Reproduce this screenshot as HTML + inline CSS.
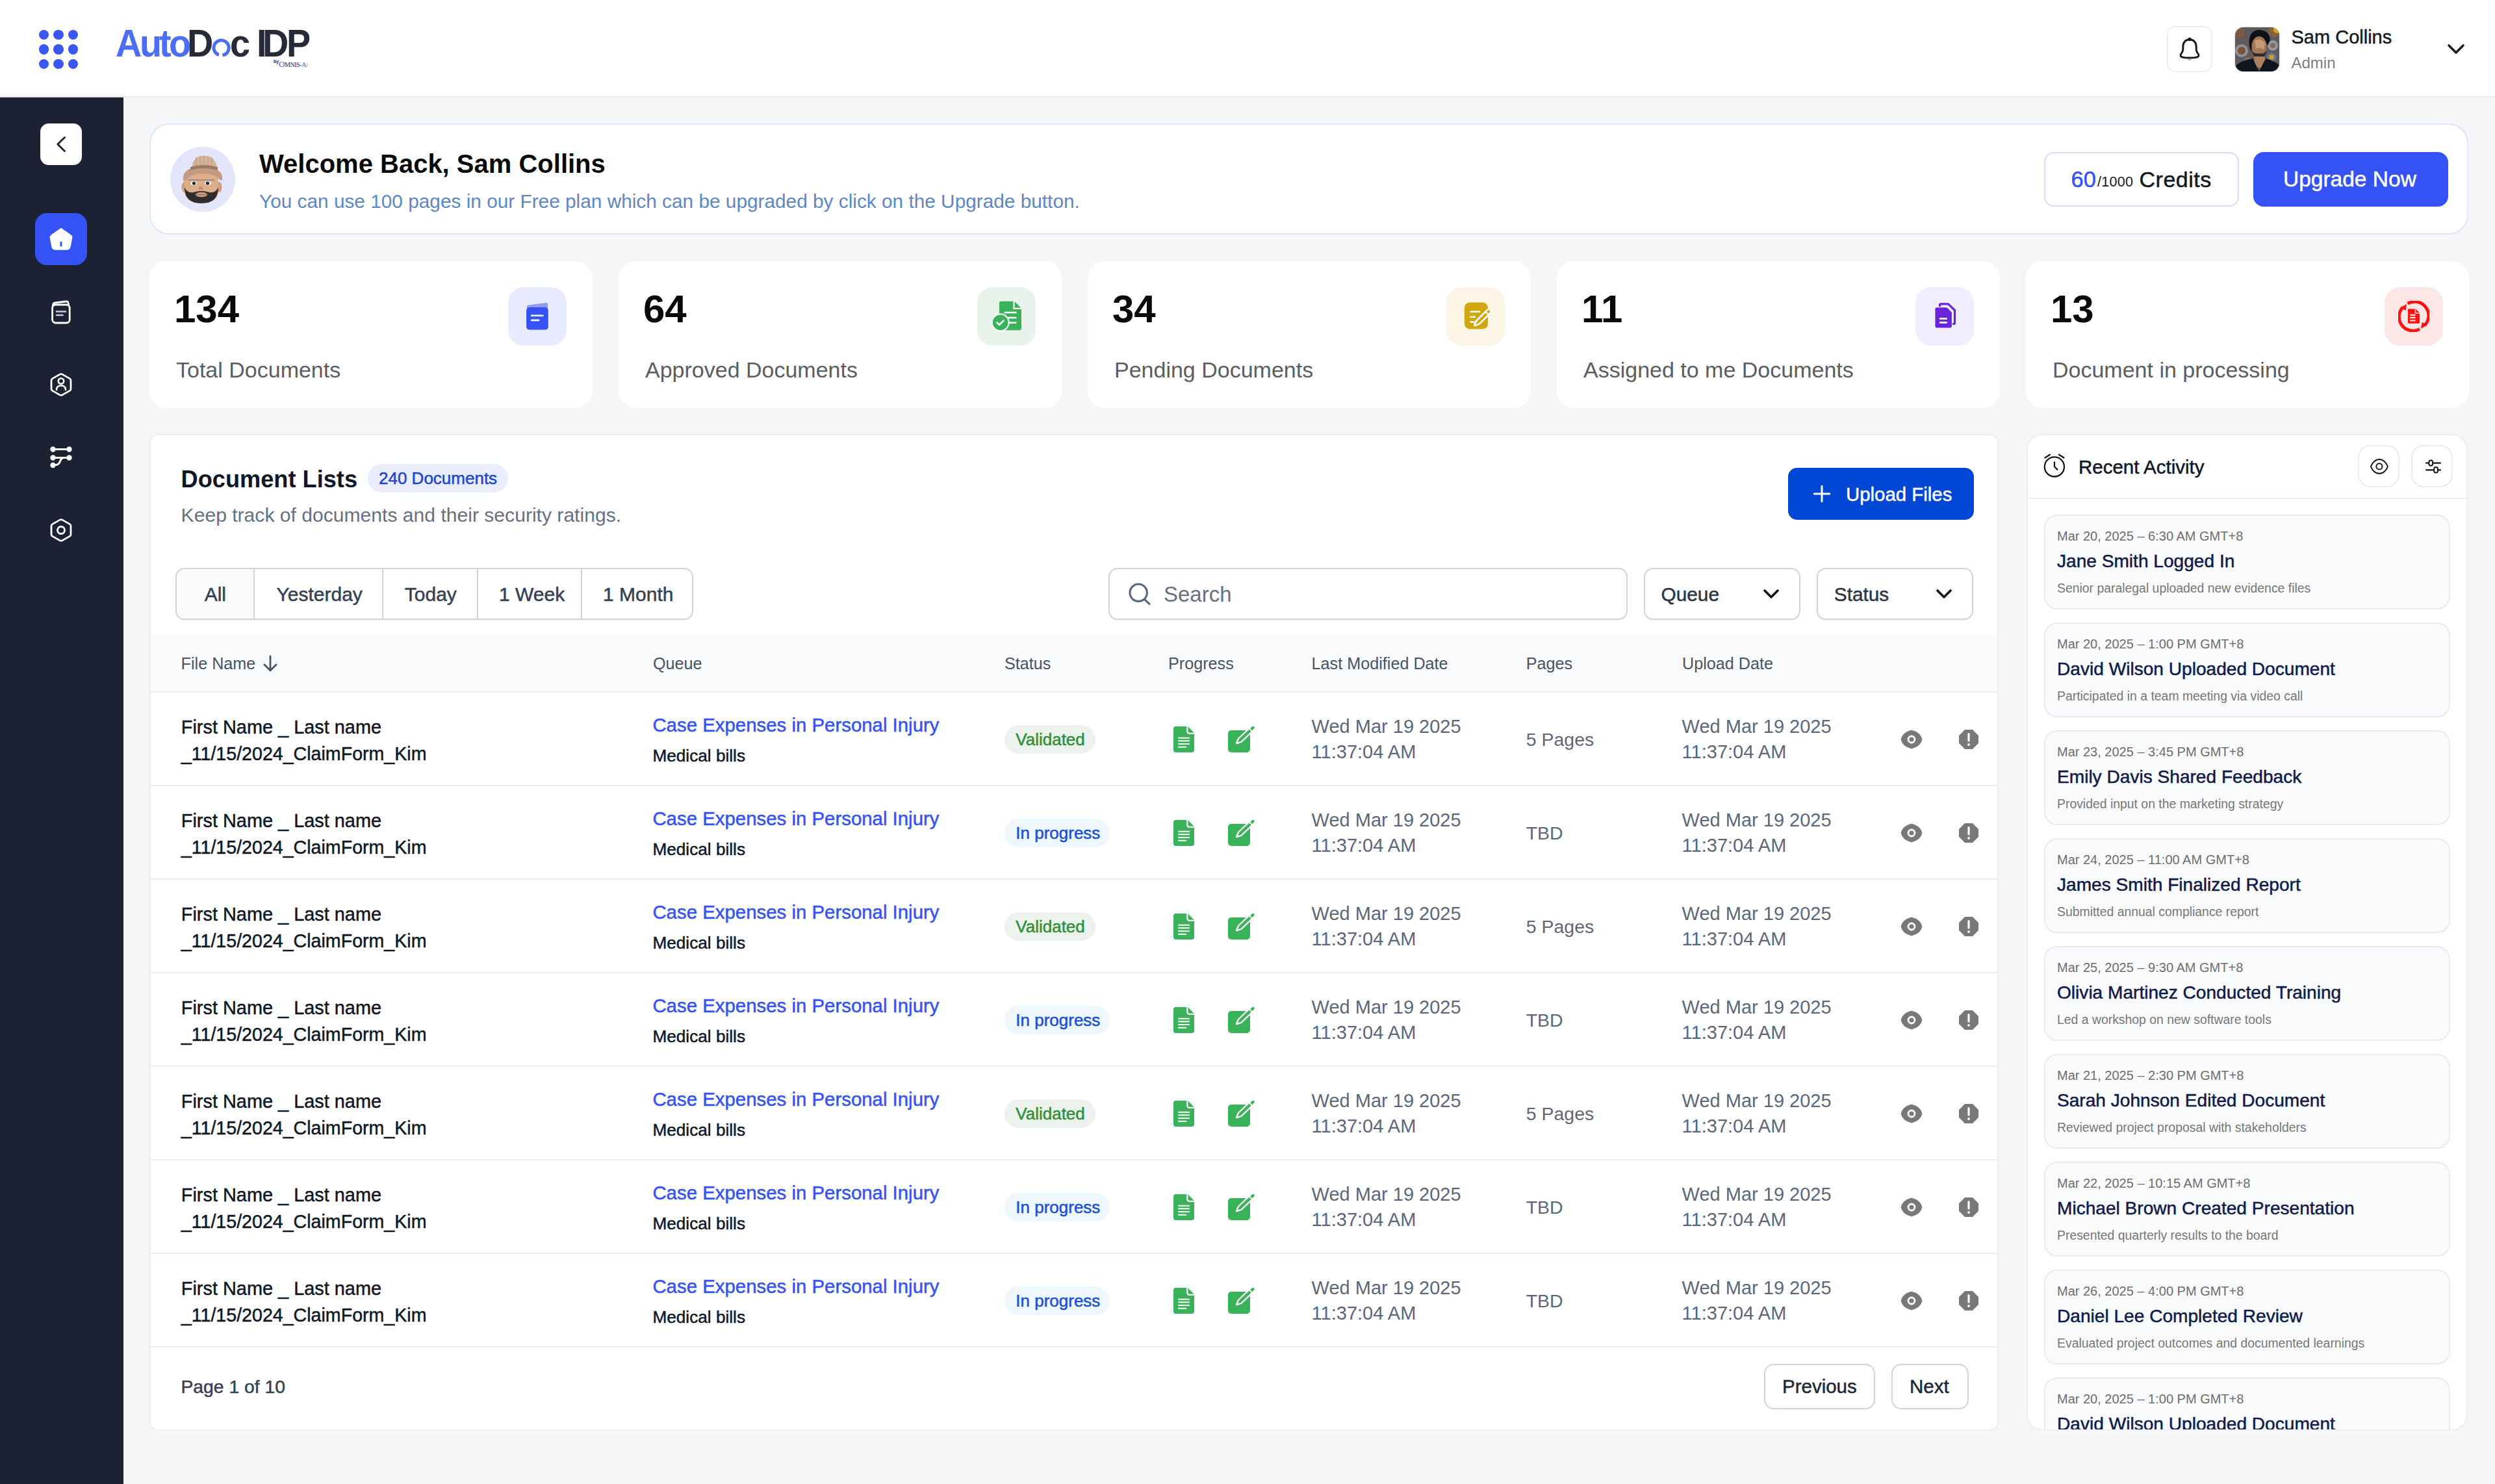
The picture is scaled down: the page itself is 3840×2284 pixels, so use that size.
<!DOCTYPE html>
<html><head><meta charset="utf-8"><title>AutoDoc IDP</title>
<style>
html,body{margin:0;padding:0;}
body{width:3840px;height:2284px;overflow:hidden;background:#f5f6f8;font-family:"Liberation Sans",sans-serif;position:relative;}
.t{position:absolute;line-height:1;white-space:nowrap;}
.b{position:absolute;box-sizing:border-box;}
.m{-webkit-text-stroke:0.5px currentColor;}
</style></head><body>

<div class="b" style="left:0.0px;top:0.0px;width:3840.0px;height:148.0px;background:#ffffff;"></div>
<div class="b" style="left:0.0px;top:148.0px;width:3840.0px;height:2.0px;background:#e7e9ee;"></div>
<div class="b" style="left:59.9px;top:45.7px;width:15.6px;height:15.6px;background:#3b57f3;border-radius:50%;"></div>
<div class="b" style="left:82.2px;top:45.7px;width:15.6px;height:15.6px;background:#3b57f3;border-radius:50%;"></div>
<div class="b" style="left:104.5px;top:45.7px;width:15.6px;height:15.6px;background:#3b57f3;border-radius:50%;"></div>
<div class="b" style="left:59.9px;top:68.2px;width:15.6px;height:15.6px;background:#3b57f3;border-radius:50%;"></div>
<div class="b" style="left:82.2px;top:68.2px;width:15.6px;height:15.6px;background:#3b57f3;border-radius:50%;"></div>
<div class="b" style="left:104.5px;top:68.2px;width:15.6px;height:15.6px;background:#3b57f3;border-radius:50%;"></div>
<div class="b" style="left:59.9px;top:90.7px;width:15.6px;height:15.6px;background:#3b57f3;border-radius:50%;"></div>
<div class="b" style="left:82.2px;top:90.7px;width:15.6px;height:15.6px;background:#3b57f3;border-radius:50%;"></div>
<div class="b" style="left:104.5px;top:90.7px;width:15.6px;height:15.6px;background:#3b57f3;border-radius:50%;"></div>
<div class="t" style="left:178.4px;top:36.8px;font-size:60px;font-weight:700;color:#4b6ef5;transform:scaleX(0.93);transform-origin:0 0;">A</div>
<div class="t" style="left:215.0px;top:36.8px;font-size:60px;font-weight:700;color:#4b6ef5;transform:scaleX(0.93);transform-origin:0 0;">u</div>
<div class="t" style="left:244.8px;top:36.8px;font-size:60px;font-weight:700;color:#4b6ef5;transform:scaleX(0.93);transform-origin:0 0;">t</div>
<div class="t" style="left:259.8px;top:36.8px;font-size:60px;font-weight:700;color:#4b6ef5;transform:scaleX(0.93);transform-origin:0 0;">o</div>
<div class="t" style="left:287.5px;top:36.8px;font-size:60px;font-weight:700;color:#262b37;transform:scaleX(0.93);transform-origin:0 0;">D</div>
<div class="t" style="left:354.1px;top:36.8px;font-size:60px;font-weight:700;color:#262b37;transform:scaleX(0.93);transform-origin:0 0;">c</div>
<div class="t" style="left:395.3px;top:36.8px;font-size:60px;font-weight:700;color:#262b37;transform:scaleX(0.93);transform-origin:0 0;">I</div>
<div class="t" style="left:403.6px;top:36.8px;font-size:60px;font-weight:700;color:#262b37;transform:scaleX(0.93);transform-origin:0 0;">D</div>
<div class="t" style="left:440.8px;top:36.8px;font-size:60px;font-weight:700;color:#262b37;transform:scaleX(0.93);transform-origin:0 0;">P</div>
<svg class="b" style="left:326.0px;top:59.0px;" width="30" height="30" viewBox="0 0 30 30"><circle cx="14.6" cy="14.6" r="11.6" fill="none" stroke="#4b6ef5" stroke-width="5" stroke-dasharray="66.8 6.1" transform="rotate(109 14.6 14.6)"/></svg>
<div class="t" style="left:421px;top:91px;font-size:7px;font-weight:700;color:#262b37;">by</div>
<div class="t" style="left:429px;top:92px;font-size:10px;color:#1c2a6b;font-family:'Liberation Serif',serif;letter-spacing:-0.4px;"><span style="color:#3e5ef0;font-size:13px">O</span>MNIS<span style="color:#3e5ef0">-A</span><span style="color:#e8a23c">i</span></div>
<div class="b" style="left:3335.0px;top:40.0px;width:70.0px;height:71.0px;border:2px solid #eceef2;border-radius:13px;background:#fff;"></div>
<svg class="b" style="left:3352.0px;top:55.0px;" width="36" height="42" viewBox="0 0 36 42"><path d="M18 5.8 C11.5 5.8 7.8 10.8 7.8 16.8 L7.8 21 C7.8 24 6.6 25.6 5 27.6 C2.8 30.4 4 32.6 8 33.4 C12 34.2 24 34.2 28 33.4 C32 32.6 33.2 30.4 31 27.6 C29.4 25.6 28.2 24 28.2 21 L28.2 16.8 C28.2 10.8 24.5 5.8 18 5.8 Z" fill="none" stroke="#14171f" stroke-width="2.9" stroke-linejoin="round"/><circle cx="18" cy="5.4" r="2.6" fill="#14171f"/><path d="M13.8 35.6 Q18 40.5 22.2 35.6 Z" fill="#a9abb0"/></svg>
<div class="b" style="left:3438px;top:40px;width:72px;height:72px;border-radius:15px;background:#eef0f4;"></div>
<svg class="b" style="left:3440.0px;top:42.0px;" width="68" height="68" viewBox="0 0 68 68"><defs><clipPath id="avc"><rect x="0" y="0" width="68" height="68" rx="13"/></clipPath></defs><g clip-path="url(#avc)"><rect width="68" height="68" fill="#5f5a5c"/><circle cx="6" cy="8" r="9" fill="#7b5a45"/><circle cx="10" cy="36" r="10" fill="#8e9099"/><circle cx="10" cy="36" r="6" fill="#7a5138"/><circle cx="60" cy="6" r="9" fill="#8a6040"/><circle cx="64" cy="4" r="5" fill="#d4a21c"/><circle cx="58" cy="28" r="8" fill="#8f97a8"/><circle cx="58" cy="28" r="4" fill="#866a5a"/><circle cx="56" cy="46" r="7" fill="#6f7a90"/><circle cx="56" cy="46" r="3.5" fill="#d3a01d"/><circle cx="44" cy="54" r="6" fill="#9aa0ae"/><circle cx="20" cy="52" r="6" fill="#8a6a58"/><path d="M22 30 Q19 6 36 4 Q53 4 54 20 L50 28 Q45 16 33 20 Q26 24 25 38 Z" fill="#0e1116"/><ellipse cx="37" cy="29" rx="11.5" ry="15" fill="#a57656"/><path d="M30 20 Q40 17 46 24 L44 34 Q38 30 32 33 Z" fill="#c59a7a"/><path d="M26 36 Q28 48 37 48 Q47 48 48 36 Q44 42 37 40 Q30 42 26 36 Z" fill="#2b2c33"/><path d="M29 45 L46 45 L44 62 L31 62 Z" fill="#ad8060"/><path d="M-2 62 Q6 52 27 48 L37 68 L47 48 Q62 52 70 60 L70 70 L-2 70 Z" fill="#10141d"/></g></svg>
<div class="t  m" style="left:3526.5px;top:42.9px;font-size:29px;color:#161a23;">Sam Collins</div>
<div class="t " style="left:3526.5px;top:85.3px;font-size:24px;color:#7d7d7d;">Admin</div>
<svg class="b" style="left:3764.0px;top:64.0px;" width="32" height="24" viewBox="0 0 32 24"><path d="M5 6 L16 17 L27 6" fill="none" stroke="#1a1d24" stroke-width="3.6" stroke-linecap="round" stroke-linejoin="round"/></svg>
<div class="b" style="left:0.0px;top:150.0px;width:190.0px;height:2134.0px;background:#1c2133;"></div>
<div class="b" style="left:190.0px;top:150.0px;width:1.0px;height:2134.0px;background:#ffffff;"></div>
<div class="b" style="left:62.0px;top:190.0px;width:64.0px;height:64.0px;background:#fff;border-radius:13px;"></div>
<svg class="b" style="left:80.0px;top:204.0px;" width="28" height="36" viewBox="0 0 28 36"><path d="M19.5 7.5 L8.8 18 L19.5 28.5" fill="none" stroke="#1c2133" stroke-width="2.9" stroke-linecap="round" stroke-linejoin="round"/></svg>
<div class="b" style="left:54.0px;top:328.0px;width:80.0px;height:80.0px;background:#3452f5;border-radius:18px;"></div>
<svg class="b" style="left:74.0px;top:348.0px;" width="40" height="40" viewBox="0 0 40 40"><path d="M20 3.5 L35 14 Q37 15.5 36.5 18 L34 31.5 Q33.3 36 29 36 L11 36 Q6.7 36 6 31.5 L3.5 18 Q3 15.5 5 14 Z" fill="#ffffff" stroke="#fff" stroke-width="1.5" stroke-linejoin="round"/><path d="M20 25 L20 30" stroke="#3452f5" stroke-width="3" stroke-linecap="round"/></svg>
<svg class="b" style="left:76.0px;top:460.0px;" width="36" height="40" viewBox="0 0 36 40"><path d="M5.5 10 Q5.5 6.5 9 6 L25 4 Q29 3.5 29.3 7 L29.5 9.5" fill="none" stroke="#fff" stroke-width="2.8" stroke-linecap="round" stroke-linejoin="round"/><rect x="4.6" y="9" width="26.6" height="28" rx="5" fill="none" stroke="#fff" stroke-width="2.8"/><path d="M11 19.5 L25 19.5 M11 25 L20.5 25" stroke="#c9ccd6" stroke-width="2.6" stroke-linecap="round"/></svg>
<svg class="b" style="left:74.0px;top:572.0px;" width="40" height="40" viewBox="0 0 40 40"><path d="M18.2 4.1 Q20 3.1 21.8 4.1 L33.3 10.6 Q35 11.6 35 13.6 L35 26.4 Q35 28.4 33.3 29.4 L21.8 35.9 Q20 36.9 18.2 35.9 L6.7 29.4 Q5 28.4 5 26.4 L5 13.6 Q5 11.6 6.7 10.6 Z" fill="none" stroke="#fff" stroke-width="2.8" stroke-linejoin="round"/><circle cx="20" cy="14.5" r="4.2" fill="none" stroke="#fff" stroke-width="2.6"/><path d="M13 28 Q13 21.5 20 21.5 Q27 21.5 27 28" fill="none" stroke="#fff" stroke-width="2.6" stroke-linecap="round"/></svg>
<svg class="b" style="left:74.0px;top:684.0px;" width="40" height="40" viewBox="0 0 40 40"><path d="M8 7.5 L32 7.5 M8 20.5 L32 20.5" stroke="#fff" stroke-width="3"/><path d="M24.5 20.5 Q20.5 20.5 18.5 26 Q16.5 32 9 32" fill="none" stroke="#fff" stroke-width="3"/><circle cx="7.5" cy="7.5" r="4.2" fill="#fff"/><circle cx="32.5" cy="7.5" r="4.2" fill="#fff"/><circle cx="7.5" cy="20.5" r="4.2" fill="#fff"/><circle cx="32.5" cy="20.5" r="4.2" fill="#fff"/><circle cx="7.5" cy="32" r="4.2" fill="#fff"/></svg>
<svg class="b" style="left:74.0px;top:796.0px;" width="40" height="40" viewBox="0 0 40 40"><path d="M18.2 4.1 Q20 3.1 21.8 4.1 L33.3 10.6 Q35 11.6 35 13.6 L35 26.4 Q35 28.4 33.3 29.4 L21.8 35.9 Q20 36.9 18.2 35.9 L6.7 29.4 Q5 28.4 5 26.4 L5 13.6 Q5 11.6 6.7 10.6 Z" fill="none" stroke="#fff" stroke-width="2.8" stroke-linejoin="round"/><circle cx="20" cy="20" r="5.5" fill="none" stroke="#fff" stroke-width="2.8"/></svg>
<div class="b" style="left:230.0px;top:190.0px;width:3569.0px;height:171.0px;background:#fff;border:2px solid #dfe4fb;border-radius:30px;"></div>
<svg class="b" style="left:262.0px;top:226.0px;" width="100" height="100" viewBox="0 0 100 100"><circle cx="50" cy="50" r="50" fill="#e3e5fb"/><ellipse cx="21.5" cy="62" rx="4" ry="8" fill="#d19f7e"/><ellipse cx="75.5" cy="62" rx="4" ry="8" fill="#d19f7e"/><path d="M22 48 Q22 40 30 40 L66 40 Q74 40 74 48 L74 68 Q74 86 48 86 Q22 86 22 68 Z" fill="#dcae8b"/><path d="M22 62 Q22 87 48 87 Q74 87 74 62 Q70 72 60 70 Q48 66 36 70 Q26 72 22 62 Z" fill="#2f2c2d"/><ellipse cx="48" cy="73.5" rx="9" ry="3.8" fill="#cf9d7b"/><path d="M38 73.5 L58 73.5" stroke="#9b6f55" stroke-width="1.2"/><ellipse cx="36" cy="56" rx="5" ry="3.2" fill="#f3f3f5"/><ellipse cx="58" cy="56" rx="5" ry="3.2" fill="#f3f3f5"/><circle cx="36.5" cy="56" r="2.6" fill="#1c2438"/><circle cx="57.5" cy="56" r="2.6" fill="#1c2438"/><ellipse cx="47" cy="63.5" rx="3.5" ry="2.6" fill="#c48e6c"/><path d="M27 51 L68 51" stroke="#6e6a70" stroke-width="1"/><path d="M33 40 Q32 13.6 52 13.6 Q72 13.6 73 40 Z" fill="#d6b49c"/><path d="M40 16 L40 36 M46 14.5 L46 36 M52 14 L52 36 M58 14.5 L58 36 M64 16 L64 36" stroke="#c29a80" stroke-width="1.2"/><path d="M20 50 Q18 32 50 30 Q82 32 80 50 Q80 53 77 51 Q68 41 50 41 Q32 41 23 52 Q20 54 20 50 Z" fill="#c49a80"/><path d="M31 31 Q50 25 73 31 L73 36 Q50 30 31 36 Z" fill="#9c7a66"/></svg>
<div class="t " style="left:399.0px;top:231.5px;font-size:40px;color:#0a0a0a;font-weight:700;">Welcome Back, Sam Collins</div>
<div class="t " style="left:399.0px;top:295.1px;font-size:29.8px;color:#5d87c4;">You can use 100 pages in our Free plan which can be upgraded by click on the Upgrade button.</div>
<div class="b" style="left:3146.0px;top:234.0px;width:300.0px;height:84.0px;background:#fff;border:2px solid #d6ddfc;border-radius:15px;"></div>
<div class="t  m" style="left:3187.5px;top:258.6px;font-size:34.5px;color:#3452f5;">60</div>
<div class="t " style="left:3228.0px;top:269.6px;font-size:21.5px;color:#141822;letter-spacing:0.3px;">/1000</div>
<div class="t  m" style="left:3292.5px;top:259.0px;font-size:34px;color:#141822;letter-spacing:0.5px;">Credits</div>
<div class="b" style="left:3468.0px;top:234.0px;width:300.0px;height:84.0px;background:#3452f5;border-radius:16px;"></div>
<div class="t  m" style="left:3514.0px;top:259.4px;font-size:33.5px;color:#ffffff;">Upgrade Now</div>
<div class="b" style="left:230.0px;top:402.0px;width:682.0px;height:226.0px;background:#fff;border-radius:26px;"></div>
<div class="t " style="left:268.0px;top:446.2px;font-size:60px;color:#0a0a0a;font-weight:700;">134</div>
<div class="t " style="left:271.0px;top:551.6px;font-size:34px;color:#5b5d62;">Total Documents</div>
<div class="b" style="left:782.0px;top:442.0px;width:90.0px;height:90.0px;background:#e8ebff;border-radius:24px;"></div>
<svg class="b" style="left:803.0px;top:463.0px;" width="48" height="48" viewBox="0 0 48 48"><path d="M8 8.5 Q8 7 9.5 6.8 L38 3 Q40 2.8 40 5 L40 12 L8 12 Z" fill="#8e9cf5"/><rect x="7.1" y="10" width="33.7" height="34.6" rx="5" fill="#3452f5"/><path d="M15 22.8 L32.4 22.8 M15 29.9 L26.2 29.9" stroke="#fff" stroke-width="2.6" stroke-linecap="round"/></svg>
<div class="b" style="left:952.0px;top:402.0px;width:682.0px;height:226.0px;background:#fff;border-radius:26px;"></div>
<div class="t " style="left:990.0px;top:446.2px;font-size:60px;color:#0a0a0a;font-weight:700;">64</div>
<div class="t " style="left:993.0px;top:551.6px;font-size:34px;color:#5b5d62;">Approved Documents</div>
<div class="b" style="left:1504.0px;top:442.0px;width:90.0px;height:90.0px;background:#e8f3ec;border-radius:24px;"></div>
<svg class="b" style="left:1525.0px;top:463.0px;" width="48" height="48" viewBox="0 0 48 48"><path d="M16 0.7 Q13 0.7 13 3.7 L13 42.2 Q13 45.2 16 45.2 L44 45.2 Q47 45.2 47 42.2 L47 11.5 L36.2 0.7 Z" fill="#3ab25a"/><path d="M35.5 0 L35.5 11.8 L48 11.8" fill="none" stroke="#fff" stroke-width="2.2"/><path d="M21.5 18 L38.5 18 M26 26 L38.5 26 M26 33.7 L38.5 33.7" stroke="#fff" stroke-width="2.4" stroke-linecap="round"/><circle cx="14.7" cy="33.3" r="14" fill="#fff"/><circle cx="14.7" cy="33.3" r="11.9" fill="#3ab25a"/><path d="M9.5 33.5 L13 37 L19.5 30.5" fill="none" stroke="#fff" stroke-width="2.5" stroke-linecap="round" stroke-linejoin="round"/></svg>
<div class="b" style="left:1674.0px;top:402.0px;width:682.0px;height:226.0px;background:#fff;border-radius:26px;"></div>
<div class="t " style="left:1712.0px;top:446.2px;font-size:60px;color:#0a0a0a;font-weight:700;">34</div>
<div class="t " style="left:1715.0px;top:551.6px;font-size:34px;color:#5b5d62;">Pending Documents</div>
<div class="b" style="left:2226.0px;top:442.0px;width:90.0px;height:90.0px;background:#fcf5e6;border-radius:24px;"></div>
<svg class="b" style="left:2247.0px;top:463.0px;" width="48" height="48" viewBox="0 0 48 48"><rect x="7" y="2.6" width="36" height="40.8" rx="8" fill="#d1a70d"/><path d="M16.5 16.7 L30 16.7 M16.5 24.8 L23 24.8 M16.5 32.6 L21 32.6" stroke="#fff" stroke-width="2.6" stroke-linecap="round"/><path d="M46 13 Q49 16.5 46 19.5 L31 34.5 Q27.5 37.5 22.5 38 Q23 33 26.5 29.5 L41.5 14.5 Q44 12 46 13 Z" fill="#d1a70d" stroke="#fff" stroke-width="2.6" stroke-linejoin="round"/><path d="M39.5 17 L44 21.5" stroke="#fff" stroke-width="2.4"/></svg>
<div class="b" style="left:2396.0px;top:402.0px;width:682.0px;height:226.0px;background:#fff;border-radius:26px;"></div>
<div class="t " style="left:2434.0px;top:446.2px;font-size:60px;color:#0a0a0a;font-weight:700;">11</div>
<div class="t " style="left:2437.0px;top:551.6px;font-size:34px;color:#5b5d62;">Assigned to me Documents</div>
<div class="b" style="left:2948.0px;top:442.0px;width:90.0px;height:90.0px;background:#efeeff;border-radius:24px;"></div>
<svg class="b" style="left:2969.0px;top:463.0px;" width="48" height="48" viewBox="0 0 48 48"><path d="M16.5 9 L16.5 6 Q16.5 4.8 18 4.8 L29.5 4.8 L39.5 14.5 L39.5 34 Q39.5 35.5 38 35.5 L36 35.5" fill="none" stroke="#6b23db" stroke-width="3.2" stroke-linejoin="round"/><path d="M11.5 9.6 L27.5 9.6 L35.5 17.6 L35.5 39.2 Q35.5 42.2 32.5 42.2 L11.8 42.2 Q8.8 42.2 8.8 39.2 L8.8 12.6 Q8.8 9.6 11.5 9.6 Z" fill="#6b23db" stroke="#fff" stroke-width="1.2"/><path d="M17 27.4 L26.7 27.4 M17 33.3 L26.7 33.3" stroke="#fff" stroke-width="2.8" stroke-linecap="round"/></svg>
<div class="b" style="left:3118.0px;top:402.0px;width:682.0px;height:226.0px;background:#fff;border-radius:26px;"></div>
<div class="t " style="left:3156.0px;top:446.2px;font-size:60px;color:#0a0a0a;font-weight:700;">13</div>
<div class="t " style="left:3159.0px;top:551.6px;font-size:34px;color:#5b5d62;">Document in processing</div>
<div class="b" style="left:3670.0px;top:442.0px;width:90.0px;height:90.0px;background:#fde6e6;border-radius:24px;"></div>
<svg class="b" style="left:3691.0px;top:463.0px;" width="48" height="48" viewBox="0 0 48 48"><path d="M14.5 4.2 A21.5 21.5 0 0 1 40.5 38" fill="none" stroke="#ff1111" stroke-width="4.8"/><path d="M33 43.5 A21.5 21.5 0 0 1 7 10" fill="none" stroke="#ff1111" stroke-width="4.8"/><path d="M3.5 10.5 L13 5 L11.5 15 Z" fill="#ff1111"/><path d="M44.5 37 L35 43 L36.5 33 Z" fill="#ff1111"/><path d="M15 12.6 L27 12.6 L33 18.6 L33 34.8 L15 34.8 Z" fill="#ff1111"/><path d="M18 21.9 L26.5 21.9 M18 25.9 L26.5 25.9 M18 30.4 L26.5 30.4" stroke="#fde6e6" stroke-width="2.2"/><path d="M26.5 12.6 L26.5 19 L33 19" fill="none" stroke="#fde6e6" stroke-width="1.5"/></svg>
<div class="b" style="left:230.0px;top:668.0px;width:2846.0px;height:1534.0px;background:#fff;border:2px solid #eceef2;border-radius:13px;"></div>
<div class="t " style="left:278.6px;top:719.7px;font-size:36.2px;color:#101828;font-weight:700;">Document Lists</div>
<div class="b" style="left:566.0px;top:714.0px;width:216.0px;height:44.0px;background:#e9edfd;border-radius:22px;"></div>
<div class="t  m" style="left:583.0px;top:722.9px;font-size:26px;color:#1d44d8;">240 Documents</div>
<div class="t " style="left:278.6px;top:777.8px;font-size:30.1px;color:#667085;">Keep track of documents and their security ratings.</div>
<div class="b" style="left:2752.0px;top:720.0px;width:286.0px;height:80.0px;background:#0047d6;border-radius:14px;"></div>
<svg class="b" style="left:2788.0px;top:744.0px;" width="32" height="32" viewBox="0 0 32 32"><path d="M16 4.3 L16 27.7 M4.3 16 L27.7 16" stroke="#fff" stroke-width="3" stroke-linecap="round"/></svg>
<div class="t  m" style="left:2841.0px;top:746.1px;font-size:29.4px;color:#ffffff;">Upload Files</div>
<div class="b" style="left:270.0px;top:874.0px;width:797.0px;height:80.0px;background:#fff;border:2px solid #d0d5dd;border-radius:14px;box-shadow:0 1px 2px rgba(16,24,40,0.05);overflow:hidden;"></div>
<div class="b" style="left:272.0px;top:876.0px;width:118.5px;height:76.0px;background:#f9fafb;border-radius:12px 0 0 12px;"></div>
<div class="b" style="left:389.5px;top:876.0px;width:2.0px;height:76.0px;background:#d0d5dd;"></div>
<div class="b" style="left:588.0px;top:876.0px;width:2.0px;height:76.0px;background:#d0d5dd;"></div>
<div class="b" style="left:734.0px;top:876.0px;width:2.0px;height:76.0px;background:#d0d5dd;"></div>
<div class="b" style="left:894.0px;top:876.0px;width:2.0px;height:76.0px;background:#d0d5dd;"></div>
<div class="t  m" style="left:314.7px;top:899.6px;font-size:30px;color:#344054;">All</div>
<div class="t  m" style="left:425.5px;top:899.6px;font-size:30px;color:#344054;">Yesterday</div>
<div class="t  m" style="left:622.8px;top:899.6px;font-size:30px;color:#344054;">Today</div>
<div class="t  m" style="left:768.0px;top:899.6px;font-size:30px;color:#344054;">1 Week</div>
<div class="t  m" style="left:928.0px;top:899.6px;font-size:30px;color:#344054;">1 Month</div>
<div class="b" style="left:1706.0px;top:874.0px;width:799.0px;height:80.0px;background:#fff;border:2px solid #d0d5dd;border-radius:14px;box-shadow:0 1px 2px rgba(16,24,40,0.05);"></div>
<svg class="b" style="left:1733.0px;top:897.0px;" width="40" height="40" viewBox="0 0 40 40"><circle cx="19.2" cy="15.2" r="13.2" fill="none" stroke="#5a6680" stroke-width="3.1"/><path d="M29 25.8 L36 32.6" stroke="#5a6680" stroke-width="3.1" stroke-linecap="round"/></svg>
<div class="t " style="left:1791.0px;top:897.6px;font-size:33px;color:#667085;">Search</div>
<div class="b" style="left:2530.0px;top:874.0px;width:241.0px;height:80.0px;background:#fff;border:2px solid #d0d5dd;border-radius:14px;box-shadow:0 1px 2px rgba(16,24,40,0.05);"></div>
<div class="t  m" style="left:2556.5px;top:900.3px;font-size:29.8px;color:#2b3548;">Queue</div>
<svg class="b" style="left:2712.0px;top:900.0px;" width="28" height="28" viewBox="0 0 28 28"><path d="M4 9 L14 19 L24 9" fill="none" stroke="#161616" stroke-width="3.7" stroke-linecap="round" stroke-linejoin="round"/></svg>
<div class="b" style="left:2796.0px;top:874.0px;width:241.0px;height:80.0px;background:#fff;border:2px solid #d0d5dd;border-radius:14px;box-shadow:0 1px 2px rgba(16,24,40,0.05);"></div>
<div class="t  m" style="left:2822.8px;top:900.3px;font-size:29.8px;color:#2b3548;">Status</div>
<svg class="b" style="left:2977.5px;top:900.0px;" width="28" height="28" viewBox="0 0 28 28"><path d="M4 9 L14 19 L24 9" fill="none" stroke="#161616" stroke-width="3.7" stroke-linecap="round" stroke-linejoin="round"/></svg>
<div class="b" style="left:232.0px;top:977.0px;width:2842.0px;height:87.0px;background:#f9fafb;"></div>
<div class="b" style="left:232.0px;top:1064.0px;width:2842.0px;height:2.0px;background:#eaecf0;"></div>
<div class="t " style="left:278.6px;top:1009.3px;font-size:25.2px;color:#475467;">File Name</div>
<div class="t " style="left:1005.0px;top:1009.3px;font-size:25.2px;color:#475467;">Queue</div>
<div class="t " style="left:1546.0px;top:1009.3px;font-size:25.2px;color:#475467;">Status</div>
<div class="t " style="left:1798.0px;top:1009.3px;font-size:25.2px;color:#475467;">Progress</div>
<div class="t " style="left:2018.6px;top:1009.3px;font-size:25.2px;color:#475467;">Last Modified Date</div>
<div class="t " style="left:2348.7px;top:1009.3px;font-size:25.2px;color:#475467;">Pages</div>
<div class="t " style="left:2589.0px;top:1009.3px;font-size:25.2px;color:#475467;">Upload Date</div>
<svg class="b" style="left:400.0px;top:1005.0px;" width="32" height="32" viewBox="0 0 32 32"><path d="M16 5 L16 27 M7 18 L16 27 L25 18" fill="none" stroke="#475467" stroke-width="2.8" stroke-linecap="round" stroke-linejoin="round"/></svg>
<div class="b" style="left:232.0px;top:1208.0px;width:2842.0px;height:2.0px;background:#eaecf0;"></div>
<div class="t  m" style="left:278.8px;top:1104.8px;font-size:28.9px;color:#101828;">First Name _ Last name</div>
<div class="t  m" style="left:278.8px;top:1145.5px;font-size:28.6px;color:#101828;">_11/15/2024_ClaimForm_Kim</div>
<div class="t  m" style="left:1004.4px;top:1101.1px;font-size:29.4px;color:#3452f5;">Case Expenses in Personal Injury</div>
<div class="t  m" style="left:1004.4px;top:1149.8px;font-size:26.2px;color:#101828;">Medical bills</div>
<div class="b" style="left:1546.0px;top:1116.0px;width:140.0px;height:44.0px;background:#ecf3ec;border-radius:22px;"></div>
<div class="t  m" style="left:1563.3px;top:1124.6px;font-size:26px;color:#2e8f3a;">Validated</div>
<svg class="b" style="left:1804.0px;top:1116.0px;" width="36" height="44" viewBox="0 0 36 44"><path d="M6 2 Q2 2 2 6 L2 38 Q2 42 6 42 L30 42 Q34 42 34 38 L34 12 L24 2 Z" fill="#3ab25a"/><path d="M23.3 0 L23.3 9.5 Q23.3 12.8 26.6 12.8 L36 12.8" fill="none" stroke="#fff" stroke-width="2.2"/><path d="M10 19.7 L26.2 19.7 M10 24.2 L26.2 24.2 M10 29 L26.2 29 M10 33.8 L21.4 33.8" stroke="#fff" stroke-width="2.1" stroke-linecap="round"/></svg>
<svg class="b" style="left:1888.0px;top:1116.0px;" width="46" height="44" viewBox="0 0 46 44"><rect x="2" y="8" width="34" height="34" rx="5" fill="#3ab25a"/><path d="M15.05 28.2 L17.8 21.0 L38.2 1.6 A3.3 3.3 0 0 1 42.8 6.4 L22.4 25.8 Z" fill="#3ab25a" stroke="#fff" stroke-width="2.3" stroke-linejoin="round"/><path d="M34.1 4.5 L39.7 10.4" stroke="#fff" stroke-width="2"/></svg>
<div class="t " style="left:2018.6px;top:1103.5px;font-size:29px;color:#5b677d;">Wed Mar 19 2025</div>
<div class="t " style="left:2018.6px;top:1142.9px;font-size:29px;color:#5b677d;">11:37:04 AM</div>
<div class="t " style="left:2348.7px;top:1123.9px;font-size:28.5px;color:#5b677d;">5 Pages</div>
<div class="t " style="left:2588.6px;top:1103.5px;font-size:29px;color:#5b677d;">Wed Mar 19 2025</div>
<div class="t " style="left:2588.6px;top:1142.9px;font-size:29px;color:#5b677d;">11:37:04 AM</div>
<svg class="b" style="left:2922.0px;top:1121.0px;" width="40" height="34" viewBox="0 0 40 34"><path d="M3.5 17 Q6 6 20 2.5 Q34 6 36.5 17 Q34 28 20 31.5 Q6 28 3.5 17 Z" fill="#787878"/><circle cx="20" cy="17" r="5" fill="none" stroke="#fff" stroke-width="2.8"/></svg>
<svg class="b" style="left:3013.0px;top:1121.0px;" width="34" height="34" viewBox="0 0 34 34"><path d="M11.5 3 L22.5 3 L31 11.5 L31 22.5 L22.5 31 L11.5 31 L3 22.5 L3 11.5 Z" fill="#787878" stroke="#787878" stroke-width="2" stroke-linejoin="round"/><path d="M17 8.5 L17 19" stroke="#fff" stroke-width="3.2" stroke-linecap="round"/><circle cx="17" cy="25" r="1.9" fill="#fff"/></svg>
<div class="b" style="left:232.0px;top:1352.0px;width:2842.0px;height:2.0px;background:#eaecf0;"></div>
<div class="t  m" style="left:278.8px;top:1248.8px;font-size:28.9px;color:#101828;">First Name _ Last name</div>
<div class="t  m" style="left:278.8px;top:1289.5px;font-size:28.6px;color:#101828;">_11/15/2024_ClaimForm_Kim</div>
<div class="t  m" style="left:1004.4px;top:1245.1px;font-size:29.4px;color:#3452f5;">Case Expenses in Personal Injury</div>
<div class="t  m" style="left:1004.4px;top:1293.8px;font-size:26.2px;color:#101828;">Medical bills</div>
<div class="b" style="left:1546.0px;top:1260.0px;width:162.0px;height:44.0px;background:#eef6fe;border-radius:22px;"></div>
<div class="t  m" style="left:1563.3px;top:1268.6px;font-size:26px;color:#1a4fd6;">In progress</div>
<svg class="b" style="left:1804.0px;top:1260.0px;" width="36" height="44" viewBox="0 0 36 44"><path d="M6 2 Q2 2 2 6 L2 38 Q2 42 6 42 L30 42 Q34 42 34 38 L34 12 L24 2 Z" fill="#3ab25a"/><path d="M23.3 0 L23.3 9.5 Q23.3 12.8 26.6 12.8 L36 12.8" fill="none" stroke="#fff" stroke-width="2.2"/><path d="M10 19.7 L26.2 19.7 M10 24.2 L26.2 24.2 M10 29 L26.2 29 M10 33.8 L21.4 33.8" stroke="#fff" stroke-width="2.1" stroke-linecap="round"/></svg>
<svg class="b" style="left:1888.0px;top:1260.0px;" width="46" height="44" viewBox="0 0 46 44"><rect x="2" y="8" width="34" height="34" rx="5" fill="#3ab25a"/><path d="M15.05 28.2 L17.8 21.0 L38.2 1.6 A3.3 3.3 0 0 1 42.8 6.4 L22.4 25.8 Z" fill="#3ab25a" stroke="#fff" stroke-width="2.3" stroke-linejoin="round"/><path d="M34.1 4.5 L39.7 10.4" stroke="#fff" stroke-width="2"/></svg>
<div class="t " style="left:2018.6px;top:1247.5px;font-size:29px;color:#5b677d;">Wed Mar 19 2025</div>
<div class="t " style="left:2018.6px;top:1286.9px;font-size:29px;color:#5b677d;">11:37:04 AM</div>
<div class="t " style="left:2348.7px;top:1267.9px;font-size:28.5px;color:#5b677d;">TBD</div>
<div class="t " style="left:2588.6px;top:1247.5px;font-size:29px;color:#5b677d;">Wed Mar 19 2025</div>
<div class="t " style="left:2588.6px;top:1286.9px;font-size:29px;color:#5b677d;">11:37:04 AM</div>
<svg class="b" style="left:2922.0px;top:1265.0px;" width="40" height="34" viewBox="0 0 40 34"><path d="M3.5 17 Q6 6 20 2.5 Q34 6 36.5 17 Q34 28 20 31.5 Q6 28 3.5 17 Z" fill="#787878"/><circle cx="20" cy="17" r="5" fill="none" stroke="#fff" stroke-width="2.8"/></svg>
<svg class="b" style="left:3013.0px;top:1265.0px;" width="34" height="34" viewBox="0 0 34 34"><path d="M11.5 3 L22.5 3 L31 11.5 L31 22.5 L22.5 31 L11.5 31 L3 22.5 L3 11.5 Z" fill="#787878" stroke="#787878" stroke-width="2" stroke-linejoin="round"/><path d="M17 8.5 L17 19" stroke="#fff" stroke-width="3.2" stroke-linecap="round"/><circle cx="17" cy="25" r="1.9" fill="#fff"/></svg>
<div class="b" style="left:232.0px;top:1496.0px;width:2842.0px;height:2.0px;background:#eaecf0;"></div>
<div class="t  m" style="left:278.8px;top:1392.8px;font-size:28.9px;color:#101828;">First Name _ Last name</div>
<div class="t  m" style="left:278.8px;top:1433.5px;font-size:28.6px;color:#101828;">_11/15/2024_ClaimForm_Kim</div>
<div class="t  m" style="left:1004.4px;top:1389.1px;font-size:29.4px;color:#3452f5;">Case Expenses in Personal Injury</div>
<div class="t  m" style="left:1004.4px;top:1437.8px;font-size:26.2px;color:#101828;">Medical bills</div>
<div class="b" style="left:1546.0px;top:1404.0px;width:140.0px;height:44.0px;background:#ecf3ec;border-radius:22px;"></div>
<div class="t  m" style="left:1563.3px;top:1412.6px;font-size:26px;color:#2e8f3a;">Validated</div>
<svg class="b" style="left:1804.0px;top:1404.0px;" width="36" height="44" viewBox="0 0 36 44"><path d="M6 2 Q2 2 2 6 L2 38 Q2 42 6 42 L30 42 Q34 42 34 38 L34 12 L24 2 Z" fill="#3ab25a"/><path d="M23.3 0 L23.3 9.5 Q23.3 12.8 26.6 12.8 L36 12.8" fill="none" stroke="#fff" stroke-width="2.2"/><path d="M10 19.7 L26.2 19.7 M10 24.2 L26.2 24.2 M10 29 L26.2 29 M10 33.8 L21.4 33.8" stroke="#fff" stroke-width="2.1" stroke-linecap="round"/></svg>
<svg class="b" style="left:1888.0px;top:1404.0px;" width="46" height="44" viewBox="0 0 46 44"><rect x="2" y="8" width="34" height="34" rx="5" fill="#3ab25a"/><path d="M15.05 28.2 L17.8 21.0 L38.2 1.6 A3.3 3.3 0 0 1 42.8 6.4 L22.4 25.8 Z" fill="#3ab25a" stroke="#fff" stroke-width="2.3" stroke-linejoin="round"/><path d="M34.1 4.5 L39.7 10.4" stroke="#fff" stroke-width="2"/></svg>
<div class="t " style="left:2018.6px;top:1391.5px;font-size:29px;color:#5b677d;">Wed Mar 19 2025</div>
<div class="t " style="left:2018.6px;top:1430.9px;font-size:29px;color:#5b677d;">11:37:04 AM</div>
<div class="t " style="left:2348.7px;top:1411.9px;font-size:28.5px;color:#5b677d;">5 Pages</div>
<div class="t " style="left:2588.6px;top:1391.5px;font-size:29px;color:#5b677d;">Wed Mar 19 2025</div>
<div class="t " style="left:2588.6px;top:1430.9px;font-size:29px;color:#5b677d;">11:37:04 AM</div>
<svg class="b" style="left:2922.0px;top:1409.0px;" width="40" height="34" viewBox="0 0 40 34"><path d="M3.5 17 Q6 6 20 2.5 Q34 6 36.5 17 Q34 28 20 31.5 Q6 28 3.5 17 Z" fill="#787878"/><circle cx="20" cy="17" r="5" fill="none" stroke="#fff" stroke-width="2.8"/></svg>
<svg class="b" style="left:3013.0px;top:1409.0px;" width="34" height="34" viewBox="0 0 34 34"><path d="M11.5 3 L22.5 3 L31 11.5 L31 22.5 L22.5 31 L11.5 31 L3 22.5 L3 11.5 Z" fill="#787878" stroke="#787878" stroke-width="2" stroke-linejoin="round"/><path d="M17 8.5 L17 19" stroke="#fff" stroke-width="3.2" stroke-linecap="round"/><circle cx="17" cy="25" r="1.9" fill="#fff"/></svg>
<div class="b" style="left:232.0px;top:1640.0px;width:2842.0px;height:2.0px;background:#eaecf0;"></div>
<div class="t  m" style="left:278.8px;top:1536.8px;font-size:28.9px;color:#101828;">First Name _ Last name</div>
<div class="t  m" style="left:278.8px;top:1577.5px;font-size:28.6px;color:#101828;">_11/15/2024_ClaimForm_Kim</div>
<div class="t  m" style="left:1004.4px;top:1533.1px;font-size:29.4px;color:#3452f5;">Case Expenses in Personal Injury</div>
<div class="t  m" style="left:1004.4px;top:1581.8px;font-size:26.2px;color:#101828;">Medical bills</div>
<div class="b" style="left:1546.0px;top:1548.0px;width:162.0px;height:44.0px;background:#eef6fe;border-radius:22px;"></div>
<div class="t  m" style="left:1563.3px;top:1556.6px;font-size:26px;color:#1a4fd6;">In progress</div>
<svg class="b" style="left:1804.0px;top:1548.0px;" width="36" height="44" viewBox="0 0 36 44"><path d="M6 2 Q2 2 2 6 L2 38 Q2 42 6 42 L30 42 Q34 42 34 38 L34 12 L24 2 Z" fill="#3ab25a"/><path d="M23.3 0 L23.3 9.5 Q23.3 12.8 26.6 12.8 L36 12.8" fill="none" stroke="#fff" stroke-width="2.2"/><path d="M10 19.7 L26.2 19.7 M10 24.2 L26.2 24.2 M10 29 L26.2 29 M10 33.8 L21.4 33.8" stroke="#fff" stroke-width="2.1" stroke-linecap="round"/></svg>
<svg class="b" style="left:1888.0px;top:1548.0px;" width="46" height="44" viewBox="0 0 46 44"><rect x="2" y="8" width="34" height="34" rx="5" fill="#3ab25a"/><path d="M15.05 28.2 L17.8 21.0 L38.2 1.6 A3.3 3.3 0 0 1 42.8 6.4 L22.4 25.8 Z" fill="#3ab25a" stroke="#fff" stroke-width="2.3" stroke-linejoin="round"/><path d="M34.1 4.5 L39.7 10.4" stroke="#fff" stroke-width="2"/></svg>
<div class="t " style="left:2018.6px;top:1535.5px;font-size:29px;color:#5b677d;">Wed Mar 19 2025</div>
<div class="t " style="left:2018.6px;top:1574.9px;font-size:29px;color:#5b677d;">11:37:04 AM</div>
<div class="t " style="left:2348.7px;top:1555.9px;font-size:28.5px;color:#5b677d;">TBD</div>
<div class="t " style="left:2588.6px;top:1535.5px;font-size:29px;color:#5b677d;">Wed Mar 19 2025</div>
<div class="t " style="left:2588.6px;top:1574.9px;font-size:29px;color:#5b677d;">11:37:04 AM</div>
<svg class="b" style="left:2922.0px;top:1553.0px;" width="40" height="34" viewBox="0 0 40 34"><path d="M3.5 17 Q6 6 20 2.5 Q34 6 36.5 17 Q34 28 20 31.5 Q6 28 3.5 17 Z" fill="#787878"/><circle cx="20" cy="17" r="5" fill="none" stroke="#fff" stroke-width="2.8"/></svg>
<svg class="b" style="left:3013.0px;top:1553.0px;" width="34" height="34" viewBox="0 0 34 34"><path d="M11.5 3 L22.5 3 L31 11.5 L31 22.5 L22.5 31 L11.5 31 L3 22.5 L3 11.5 Z" fill="#787878" stroke="#787878" stroke-width="2" stroke-linejoin="round"/><path d="M17 8.5 L17 19" stroke="#fff" stroke-width="3.2" stroke-linecap="round"/><circle cx="17" cy="25" r="1.9" fill="#fff"/></svg>
<div class="b" style="left:232.0px;top:1784.0px;width:2842.0px;height:2.0px;background:#eaecf0;"></div>
<div class="t  m" style="left:278.8px;top:1680.8px;font-size:28.9px;color:#101828;">First Name _ Last name</div>
<div class="t  m" style="left:278.8px;top:1721.5px;font-size:28.6px;color:#101828;">_11/15/2024_ClaimForm_Kim</div>
<div class="t  m" style="left:1004.4px;top:1677.1px;font-size:29.4px;color:#3452f5;">Case Expenses in Personal Injury</div>
<div class="t  m" style="left:1004.4px;top:1725.8px;font-size:26.2px;color:#101828;">Medical bills</div>
<div class="b" style="left:1546.0px;top:1692.0px;width:140.0px;height:44.0px;background:#ecf3ec;border-radius:22px;"></div>
<div class="t  m" style="left:1563.3px;top:1700.6px;font-size:26px;color:#2e8f3a;">Validated</div>
<svg class="b" style="left:1804.0px;top:1692.0px;" width="36" height="44" viewBox="0 0 36 44"><path d="M6 2 Q2 2 2 6 L2 38 Q2 42 6 42 L30 42 Q34 42 34 38 L34 12 L24 2 Z" fill="#3ab25a"/><path d="M23.3 0 L23.3 9.5 Q23.3 12.8 26.6 12.8 L36 12.8" fill="none" stroke="#fff" stroke-width="2.2"/><path d="M10 19.7 L26.2 19.7 M10 24.2 L26.2 24.2 M10 29 L26.2 29 M10 33.8 L21.4 33.8" stroke="#fff" stroke-width="2.1" stroke-linecap="round"/></svg>
<svg class="b" style="left:1888.0px;top:1692.0px;" width="46" height="44" viewBox="0 0 46 44"><rect x="2" y="8" width="34" height="34" rx="5" fill="#3ab25a"/><path d="M15.05 28.2 L17.8 21.0 L38.2 1.6 A3.3 3.3 0 0 1 42.8 6.4 L22.4 25.8 Z" fill="#3ab25a" stroke="#fff" stroke-width="2.3" stroke-linejoin="round"/><path d="M34.1 4.5 L39.7 10.4" stroke="#fff" stroke-width="2"/></svg>
<div class="t " style="left:2018.6px;top:1679.5px;font-size:29px;color:#5b677d;">Wed Mar 19 2025</div>
<div class="t " style="left:2018.6px;top:1718.9px;font-size:29px;color:#5b677d;">11:37:04 AM</div>
<div class="t " style="left:2348.7px;top:1699.9px;font-size:28.5px;color:#5b677d;">5 Pages</div>
<div class="t " style="left:2588.6px;top:1679.5px;font-size:29px;color:#5b677d;">Wed Mar 19 2025</div>
<div class="t " style="left:2588.6px;top:1718.9px;font-size:29px;color:#5b677d;">11:37:04 AM</div>
<svg class="b" style="left:2922.0px;top:1697.0px;" width="40" height="34" viewBox="0 0 40 34"><path d="M3.5 17 Q6 6 20 2.5 Q34 6 36.5 17 Q34 28 20 31.5 Q6 28 3.5 17 Z" fill="#787878"/><circle cx="20" cy="17" r="5" fill="none" stroke="#fff" stroke-width="2.8"/></svg>
<svg class="b" style="left:3013.0px;top:1697.0px;" width="34" height="34" viewBox="0 0 34 34"><path d="M11.5 3 L22.5 3 L31 11.5 L31 22.5 L22.5 31 L11.5 31 L3 22.5 L3 11.5 Z" fill="#787878" stroke="#787878" stroke-width="2" stroke-linejoin="round"/><path d="M17 8.5 L17 19" stroke="#fff" stroke-width="3.2" stroke-linecap="round"/><circle cx="17" cy="25" r="1.9" fill="#fff"/></svg>
<div class="b" style="left:232.0px;top:1928.0px;width:2842.0px;height:2.0px;background:#eaecf0;"></div>
<div class="t  m" style="left:278.8px;top:1824.8px;font-size:28.9px;color:#101828;">First Name _ Last name</div>
<div class="t  m" style="left:278.8px;top:1865.5px;font-size:28.6px;color:#101828;">_11/15/2024_ClaimForm_Kim</div>
<div class="t  m" style="left:1004.4px;top:1821.1px;font-size:29.4px;color:#3452f5;">Case Expenses in Personal Injury</div>
<div class="t  m" style="left:1004.4px;top:1869.8px;font-size:26.2px;color:#101828;">Medical bills</div>
<div class="b" style="left:1546.0px;top:1836.0px;width:162.0px;height:44.0px;background:#eef6fe;border-radius:22px;"></div>
<div class="t  m" style="left:1563.3px;top:1844.6px;font-size:26px;color:#1a4fd6;">In progress</div>
<svg class="b" style="left:1804.0px;top:1836.0px;" width="36" height="44" viewBox="0 0 36 44"><path d="M6 2 Q2 2 2 6 L2 38 Q2 42 6 42 L30 42 Q34 42 34 38 L34 12 L24 2 Z" fill="#3ab25a"/><path d="M23.3 0 L23.3 9.5 Q23.3 12.8 26.6 12.8 L36 12.8" fill="none" stroke="#fff" stroke-width="2.2"/><path d="M10 19.7 L26.2 19.7 M10 24.2 L26.2 24.2 M10 29 L26.2 29 M10 33.8 L21.4 33.8" stroke="#fff" stroke-width="2.1" stroke-linecap="round"/></svg>
<svg class="b" style="left:1888.0px;top:1836.0px;" width="46" height="44" viewBox="0 0 46 44"><rect x="2" y="8" width="34" height="34" rx="5" fill="#3ab25a"/><path d="M15.05 28.2 L17.8 21.0 L38.2 1.6 A3.3 3.3 0 0 1 42.8 6.4 L22.4 25.8 Z" fill="#3ab25a" stroke="#fff" stroke-width="2.3" stroke-linejoin="round"/><path d="M34.1 4.5 L39.7 10.4" stroke="#fff" stroke-width="2"/></svg>
<div class="t " style="left:2018.6px;top:1823.5px;font-size:29px;color:#5b677d;">Wed Mar 19 2025</div>
<div class="t " style="left:2018.6px;top:1862.9px;font-size:29px;color:#5b677d;">11:37:04 AM</div>
<div class="t " style="left:2348.7px;top:1843.9px;font-size:28.5px;color:#5b677d;">TBD</div>
<div class="t " style="left:2588.6px;top:1823.5px;font-size:29px;color:#5b677d;">Wed Mar 19 2025</div>
<div class="t " style="left:2588.6px;top:1862.9px;font-size:29px;color:#5b677d;">11:37:04 AM</div>
<svg class="b" style="left:2922.0px;top:1841.0px;" width="40" height="34" viewBox="0 0 40 34"><path d="M3.5 17 Q6 6 20 2.5 Q34 6 36.5 17 Q34 28 20 31.5 Q6 28 3.5 17 Z" fill="#787878"/><circle cx="20" cy="17" r="5" fill="none" stroke="#fff" stroke-width="2.8"/></svg>
<svg class="b" style="left:3013.0px;top:1841.0px;" width="34" height="34" viewBox="0 0 34 34"><path d="M11.5 3 L22.5 3 L31 11.5 L31 22.5 L22.5 31 L11.5 31 L3 22.5 L3 11.5 Z" fill="#787878" stroke="#787878" stroke-width="2" stroke-linejoin="round"/><path d="M17 8.5 L17 19" stroke="#fff" stroke-width="3.2" stroke-linecap="round"/><circle cx="17" cy="25" r="1.9" fill="#fff"/></svg>
<div class="b" style="left:232.0px;top:2072.0px;width:2842.0px;height:2.0px;background:#eaecf0;"></div>
<div class="t  m" style="left:278.8px;top:1968.8px;font-size:28.9px;color:#101828;">First Name _ Last name</div>
<div class="t  m" style="left:278.8px;top:2009.5px;font-size:28.6px;color:#101828;">_11/15/2024_ClaimForm_Kim</div>
<div class="t  m" style="left:1004.4px;top:1965.1px;font-size:29.4px;color:#3452f5;">Case Expenses in Personal Injury</div>
<div class="t  m" style="left:1004.4px;top:2013.8px;font-size:26.2px;color:#101828;">Medical bills</div>
<div class="b" style="left:1546.0px;top:1980.0px;width:162.0px;height:44.0px;background:#eef6fe;border-radius:22px;"></div>
<div class="t  m" style="left:1563.3px;top:1988.6px;font-size:26px;color:#1a4fd6;">In progress</div>
<svg class="b" style="left:1804.0px;top:1980.0px;" width="36" height="44" viewBox="0 0 36 44"><path d="M6 2 Q2 2 2 6 L2 38 Q2 42 6 42 L30 42 Q34 42 34 38 L34 12 L24 2 Z" fill="#3ab25a"/><path d="M23.3 0 L23.3 9.5 Q23.3 12.8 26.6 12.8 L36 12.8" fill="none" stroke="#fff" stroke-width="2.2"/><path d="M10 19.7 L26.2 19.7 M10 24.2 L26.2 24.2 M10 29 L26.2 29 M10 33.8 L21.4 33.8" stroke="#fff" stroke-width="2.1" stroke-linecap="round"/></svg>
<svg class="b" style="left:1888.0px;top:1980.0px;" width="46" height="44" viewBox="0 0 46 44"><rect x="2" y="8" width="34" height="34" rx="5" fill="#3ab25a"/><path d="M15.05 28.2 L17.8 21.0 L38.2 1.6 A3.3 3.3 0 0 1 42.8 6.4 L22.4 25.8 Z" fill="#3ab25a" stroke="#fff" stroke-width="2.3" stroke-linejoin="round"/><path d="M34.1 4.5 L39.7 10.4" stroke="#fff" stroke-width="2"/></svg>
<div class="t " style="left:2018.6px;top:1967.5px;font-size:29px;color:#5b677d;">Wed Mar 19 2025</div>
<div class="t " style="left:2018.6px;top:2006.9px;font-size:29px;color:#5b677d;">11:37:04 AM</div>
<div class="t " style="left:2348.7px;top:1987.9px;font-size:28.5px;color:#5b677d;">TBD</div>
<div class="t " style="left:2588.6px;top:1967.5px;font-size:29px;color:#5b677d;">Wed Mar 19 2025</div>
<div class="t " style="left:2588.6px;top:2006.9px;font-size:29px;color:#5b677d;">11:37:04 AM</div>
<svg class="b" style="left:2922.0px;top:1985.0px;" width="40" height="34" viewBox="0 0 40 34"><path d="M3.5 17 Q6 6 20 2.5 Q34 6 36.5 17 Q34 28 20 31.5 Q6 28 3.5 17 Z" fill="#787878"/><circle cx="20" cy="17" r="5" fill="none" stroke="#fff" stroke-width="2.8"/></svg>
<svg class="b" style="left:3013.0px;top:1985.0px;" width="34" height="34" viewBox="0 0 34 34"><path d="M11.5 3 L22.5 3 L31 11.5 L31 22.5 L22.5 31 L11.5 31 L3 22.5 L3 11.5 Z" fill="#787878" stroke="#787878" stroke-width="2" stroke-linejoin="round"/><path d="M17 8.5 L17 19" stroke="#fff" stroke-width="3.2" stroke-linecap="round"/><circle cx="17" cy="25" r="1.9" fill="#fff"/></svg>
<div class="t  m" style="left:278.5px;top:2120.3px;font-size:28.3px;color:#344054;">Page 1 of 10</div>
<div class="b" style="left:2715.0px;top:2099.0px;width:171.0px;height:70.0px;background:#fff;border:2px solid #d0d5dd;border-radius:15px;box-shadow:0 1px 2px rgba(16,24,40,0.05);"></div>
<div class="t  m" style="left:2743.0px;top:2118.7px;font-size:29.5px;color:#1d2939;">Previous</div>
<div class="b" style="left:2911.0px;top:2099.0px;width:119.0px;height:70.0px;background:#fff;border:2px solid #d0d5dd;border-radius:15px;box-shadow:0 1px 2px rgba(16,24,40,0.05);"></div>
<div class="t  m" style="left:2939.0px;top:2118.7px;font-size:29.5px;color:#1d2939;">Next</div>
<div class="b" style="left:3119px;top:668px;width:679px;height:1534px;background:#fff;border:2px solid #eceef2;border-radius:24px;overflow:hidden;">
<svg class="b" style="left:22.0px;top:26.0px;" width="40" height="42" viewBox="0 0 40 42"><circle cx="18.9" cy="22.4" r="15.1" fill="none" stroke="#121620" stroke-width="2.3"/><path d="M19 15.5 L19 22.2 L23.4 26.6" fill="none" stroke="#121620" stroke-width="2.3" stroke-linecap="round" stroke-linejoin="round"/><path d="M4.5 8.5 L11.9 3.8 M26 3.8 L33.4 8.5" stroke="#121620" stroke-width="2.3" stroke-linecap="round"/></svg>
<div class="t" style="left:78.0px;top:33.8px;font-size:29.5px;color:#101828;-webkit-text-stroke:0.5px currentColor;">Recent Activity</div>
<div class="b" style="left:508.0px;top:15.0px;width:64.0px;height:65.0px;border:2px solid #eaecf0;border-radius:19px;"></div>
<svg class="b" style="left:524.0px;top:31.0px;" width="32" height="32" viewBox="0 0 32 32"><path d="M3.9 17 C6 11 11 6 16.9 6 C22.8 6 27.8 11 29.9 17 C27.8 23 22.8 27.8 16.9 27.8 C11 27.8 6 23 3.9 17 Z" fill="none" stroke="#121620" stroke-width="2" stroke-linejoin="round"/><circle cx="16.9" cy="16.9" r="4.6" fill="none" stroke="#121620" stroke-width="2"/></svg>
<div class="b" style="left:590.0px;top:15.0px;width:64.0px;height:65.0px;border:2px solid #eaecf0;border-radius:19px;"></div>
<svg class="b" style="left:606.0px;top:31.0px;" width="32" height="32" viewBox="0 0 32 32"><path d="M7 11.6 L11 11.6 M18 11.6 L29 11.6 M7 22.3 L19 22.3 M25 22.3 L29 22.3" stroke="#121620" stroke-width="2.2" stroke-linecap="round"/><rect x="11.4" y="7.6" width="5.7" height="8.1" rx="2.6" fill="none" stroke="#121620" stroke-width="2"/><rect x="19.2" y="18.1" width="5.7" height="8.5" rx="2.6" fill="none" stroke="#121620" stroke-width="2"/></svg>
<div class="b" style="left:1.0px;top:96.0px;width:674.0px;height:2.0px;background:#eceef2;"></div>
<div class="b" style="left:25.0px;top:122.1px;width:625.0px;height:145.5px;background:#f9fafb;border:2px solid #eaebf0;border-radius:20px;"></div>
<div class="t" style="left:45.0px;top:145.1px;font-size:20px;color:#6e6e6e;">Mar 20, 2025 – 6:30 AM GMT+8</div>
<div class="t" style="left:45.0px;top:180.3px;font-size:28.1px;color:#0f1a4c;-webkit-text-stroke:0.5px currentColor;">Jane Smith Logged In</div>
<div class="t" style="left:45.0px;top:225.6px;font-size:19.4px;color:#777777;">Senior paralegal uploaded new evidence files</div>
<div class="b" style="left:25.0px;top:288.1px;width:625.0px;height:145.5px;background:#f9fafb;border:2px solid #eaebf0;border-radius:20px;"></div>
<div class="t" style="left:45.0px;top:311.1px;font-size:20px;color:#6e6e6e;">Mar 20, 2025 – 1:00 PM GMT+8</div>
<div class="t" style="left:45.0px;top:346.3px;font-size:28.1px;color:#0f1a4c;-webkit-text-stroke:0.5px currentColor;">David Wilson Uploaded Document</div>
<div class="t" style="left:45.0px;top:391.6px;font-size:19.4px;color:#777777;">Participated in a team meeting via video call</div>
<div class="b" style="left:25.0px;top:454.1px;width:625.0px;height:145.5px;background:#f9fafb;border:2px solid #eaebf0;border-radius:20px;"></div>
<div class="t" style="left:45.0px;top:477.1px;font-size:20px;color:#6e6e6e;">Mar 23, 2025 – 3:45 PM GMT+8</div>
<div class="t" style="left:45.0px;top:512.3px;font-size:28.1px;color:#0f1a4c;-webkit-text-stroke:0.5px currentColor;">Emily Davis Shared Feedback</div>
<div class="t" style="left:45.0px;top:557.6px;font-size:19.4px;color:#777777;">Provided input on the marketing strategy</div>
<div class="b" style="left:25.0px;top:620.1px;width:625.0px;height:145.5px;background:#f9fafb;border:2px solid #eaebf0;border-radius:20px;"></div>
<div class="t" style="left:45.0px;top:643.1px;font-size:20px;color:#6e6e6e;">Mar 24, 2025 – 11:00 AM GMT+8</div>
<div class="t" style="left:45.0px;top:678.3px;font-size:28.1px;color:#0f1a4c;-webkit-text-stroke:0.5px currentColor;">James Smith Finalized Report</div>
<div class="t" style="left:45.0px;top:723.6px;font-size:19.4px;color:#777777;">Submitted annual compliance report</div>
<div class="b" style="left:25.0px;top:786.1px;width:625.0px;height:145.5px;background:#f9fafb;border:2px solid #eaebf0;border-radius:20px;"></div>
<div class="t" style="left:45.0px;top:809.1px;font-size:20px;color:#6e6e6e;">Mar 25, 2025 – 9:30 AM GMT+8</div>
<div class="t" style="left:45.0px;top:844.3px;font-size:28.1px;color:#0f1a4c;-webkit-text-stroke:0.5px currentColor;">Olivia Martinez Conducted Training</div>
<div class="t" style="left:45.0px;top:889.6px;font-size:19.4px;color:#777777;">Led a workshop on new software tools</div>
<div class="b" style="left:25.0px;top:952.1px;width:625.0px;height:145.5px;background:#f9fafb;border:2px solid #eaebf0;border-radius:20px;"></div>
<div class="t" style="left:45.0px;top:975.1px;font-size:20px;color:#6e6e6e;">Mar 21, 2025 – 2:30 PM GMT+8</div>
<div class="t" style="left:45.0px;top:1010.3px;font-size:28.1px;color:#0f1a4c;-webkit-text-stroke:0.5px currentColor;">Sarah Johnson Edited Document</div>
<div class="t" style="left:45.0px;top:1055.6px;font-size:19.4px;color:#777777;">Reviewed project proposal with stakeholders</div>
<div class="b" style="left:25.0px;top:1118.1px;width:625.0px;height:145.5px;background:#f9fafb;border:2px solid #eaebf0;border-radius:20px;"></div>
<div class="t" style="left:45.0px;top:1141.1px;font-size:20px;color:#6e6e6e;">Mar 22, 2025 – 10:15 AM GMT+8</div>
<div class="t" style="left:45.0px;top:1176.3px;font-size:28.1px;color:#0f1a4c;-webkit-text-stroke:0.5px currentColor;">Michael Brown Created Presentation</div>
<div class="t" style="left:45.0px;top:1221.6px;font-size:19.4px;color:#777777;">Presented quarterly results to the board</div>
<div class="b" style="left:25.0px;top:1284.1px;width:625.0px;height:145.5px;background:#f9fafb;border:2px solid #eaebf0;border-radius:20px;"></div>
<div class="t" style="left:45.0px;top:1307.1px;font-size:20px;color:#6e6e6e;">Mar 26, 2025 – 4:00 PM GMT+8</div>
<div class="t" style="left:45.0px;top:1342.3px;font-size:28.1px;color:#0f1a4c;-webkit-text-stroke:0.5px currentColor;">Daniel Lee Completed Review</div>
<div class="t" style="left:45.0px;top:1387.6px;font-size:19.4px;color:#777777;">Evaluated project outcomes and documented learnings</div>
<div class="b" style="left:25.0px;top:1450.1px;width:625.0px;height:145.5px;background:#f9fafb;border:2px solid #eaebf0;border-radius:20px;"></div>
<div class="t" style="left:45.0px;top:1473.1px;font-size:20px;color:#6e6e6e;">Mar 20, 2025 – 1:00 PM GMT+8</div>
<div class="t" style="left:45.0px;top:1508.3px;font-size:28.1px;color:#0f1a4c;-webkit-text-stroke:0.5px currentColor;">David Wilson Uploaded Document</div>
<div class="t" style="left:45.0px;top:1553.6px;font-size:19.4px;color:#777777;">Participated in a team meeting via video call</div>
</div>
</body></html>
